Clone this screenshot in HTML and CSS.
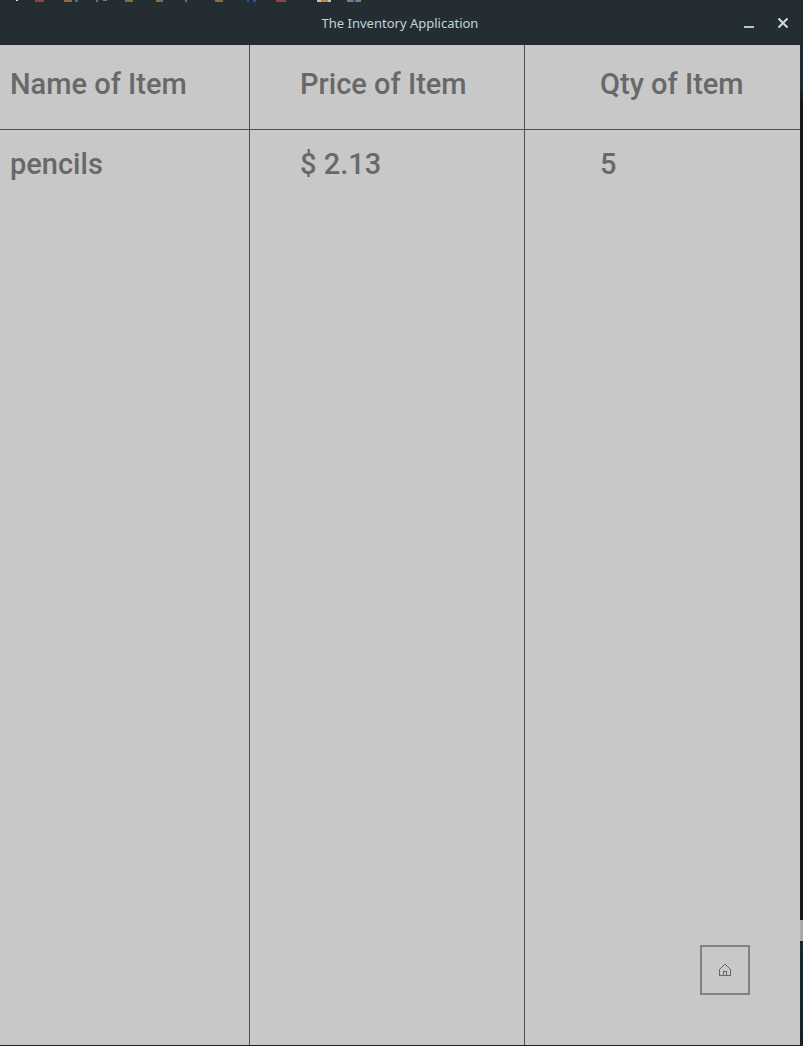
FILE: index.html
```html
<!DOCTYPE html>
<html lang="en">
<head>
<meta charset="utf-8">
<meta name="viewport" content="width=device-width, initial-scale=1">
<title>The Inventory Application</title>
<link rel="stylesheet" href="styles.css">
</head>
<body class="desktop">
<svg class="taskbar" viewBox="0 0 803 3" preserveAspectRatio="xMinYMin slice" aria-hidden="true">
  <path fill="#e2e6e6" d="M16 0h2v1h-2z"/>
  <path fill="#93424a" d="M35 0h9v2h-9zM276 0h10v2h-10z"/>
  <path fill="#8a6d42" d="M64 0h8v2h-8zM96 0h2v2h-2zM125 0h8v2h-8zM156 0h7v2h-7zM185 0h2v2h-2zM215 0h8v2h-8z"/>
  <path fill="#5b629c" d="M75 0h3v2h-3z"/>
  <path fill="#777e80" d="M103 0h4v1h-4zM347 0h14v2h-14z"/>
  <path fill="#2d559c" d="M247 0h2v2h-2zM253 0h3v2h-3zM353 0h3v2h-3z"/>
  <path fill="#c4c2c0" d="M317 0h14v2h-14z"/>
  <path fill="#c48445" d="M321 0h7v2h-7z"/>
</svg>
<div class="window">
  <header class="titlebar">
    <h1 class="title">The Inventory Application</h1>
    <div class="window-controls">
      <button class="control" type="button" aria-label="Minimize">
        <svg class="control-icon" viewBox="0 0 12 12" aria-hidden="true"><path fill="#b4c8cd" d="M1 9h10v2H1z"/></svg>
      </button>
      <button class="control" type="button" aria-label="Close">
        <svg class="control-icon" viewBox="0 0 12 12" aria-hidden="true"><path fill="none" stroke="#cfdee1" stroke-width="2" d="M1.500 1.500l9 9M10.500 1.500l-9 9"/></svg>
      </button>
    </div>
  </header>
  <main class="content">
    <table class="inventory">
      <thead>
        <tr>
          <th class="cell head name" scope="col">Name of Item</th>
          <th class="cell head price" scope="col">Price of Item</th>
          <th class="cell head qty" scope="col">Qty of Item</th>
        </tr>
      </thead>
      <tbody>
        <tr>
          <td class="cell name">pencils</td>
          <td class="cell price">$ 2.13</td>
          <td class="cell qty">5</td>
        </tr>
      </tbody>
    </table>
    <button class="home" type="button" aria-label="Home">
      <svg class="home-icon" viewBox="0 0 12 12" shape-rendering="crispEdges" aria-hidden="true">
        <path fill="#686868" d="M5 0h2v1H5zM4 1h1v1H4zM7 1h1v1H7zM3 2h1v1H3zM8 2h1v1H8zM2 3h1v1H2zM9 3h1v1H9zM1 4h1v1H1zM10 4h1v1h-1zM0 5h1v7H0zM11 5h1v7h-1zM1 11h10v1H1zM4 7h4v1H4zM4 8h1v3H4zM7 8h1v3H7z"/>
      </svg>
    </button>
  </main>
</div>
</body>
</html>
```
FILE: styles.css
```css
* {
  box-sizing: border-box;
}

.desktop {
  display: flex;
  flex-direction: column;
  min-height: 100vh;
  margin: 0;
  padding: 0 3px 1px 0;
  background: linear-gradient(#1d282e 0, #202d34 8%, #11181d 10%, #11181d 88%, #aaaaaa 88%, #aaaaaa 90%, #1a2930 90%, #14212a 100%);
}

.taskbar {
  display: block;
  width: 100%;
  height: 3px;
  background: #222d32;
}

.window {
  display: flex;
  flex: 1;
  flex-direction: column;
}

.titlebar {
  display: grid;
  grid-template-columns: 1fr auto 1fr;
  align-items: center;
  height: 42px;
  padding: 0 7px 2px;
  background: #232d32;
}

.title {
  grid-column: 2;
  margin: 0;
  color: #c0d6dc;
  font: 400 13px/20px "Noto Sans", "Open Sans", sans-serif;
}

.window-controls {
  display: flex;
  justify-content: flex-end;
  gap: 14px;
}

.control {
  display: grid;
  place-items: center;
  width: 20px;
  height: 20px;
  padding: 0;
  border: 0;
  background: none;
}

.control-icon {
  width: 12px;
  height: 12px;
}

.content {
  position: relative;
  display: grid;
  flex: 1;
  background: #c8c8c8;
}

.inventory {
  width: 100%;
  height: 100%;
  border-collapse: separate;
  border-spacing: 0;
  table-layout: fixed;
  color: #686868;
  font: 500 29px/40px Roboto, sans-serif;
}

.cell {
  padding: 14px 0 0 10px;
  border-right: 1px solid #505050;
  font-weight: 500;
  text-align: left;
  vertical-align: top;
  white-space: nowrap;
}

.head {
  height: 85px;
  padding-top: 19px;
  border-bottom: 1px solid #505050;
}

.name {
  width: 31.25%;
}

.price {
  padding-left: 50px;
}

.qty {
  padding-left: 75px;
  border-right: 0;
}

.home {
  position: absolute;
  right: 50px;
  bottom: 50px;
  display: grid;
  place-items: center;
  width: 50px;
  height: 50px;
  padding: 0;
  border: 2px solid #828282;
  background: #c8c8c8;
}

.home-icon {
  width: 12px;
  height: 12px;
}
```
